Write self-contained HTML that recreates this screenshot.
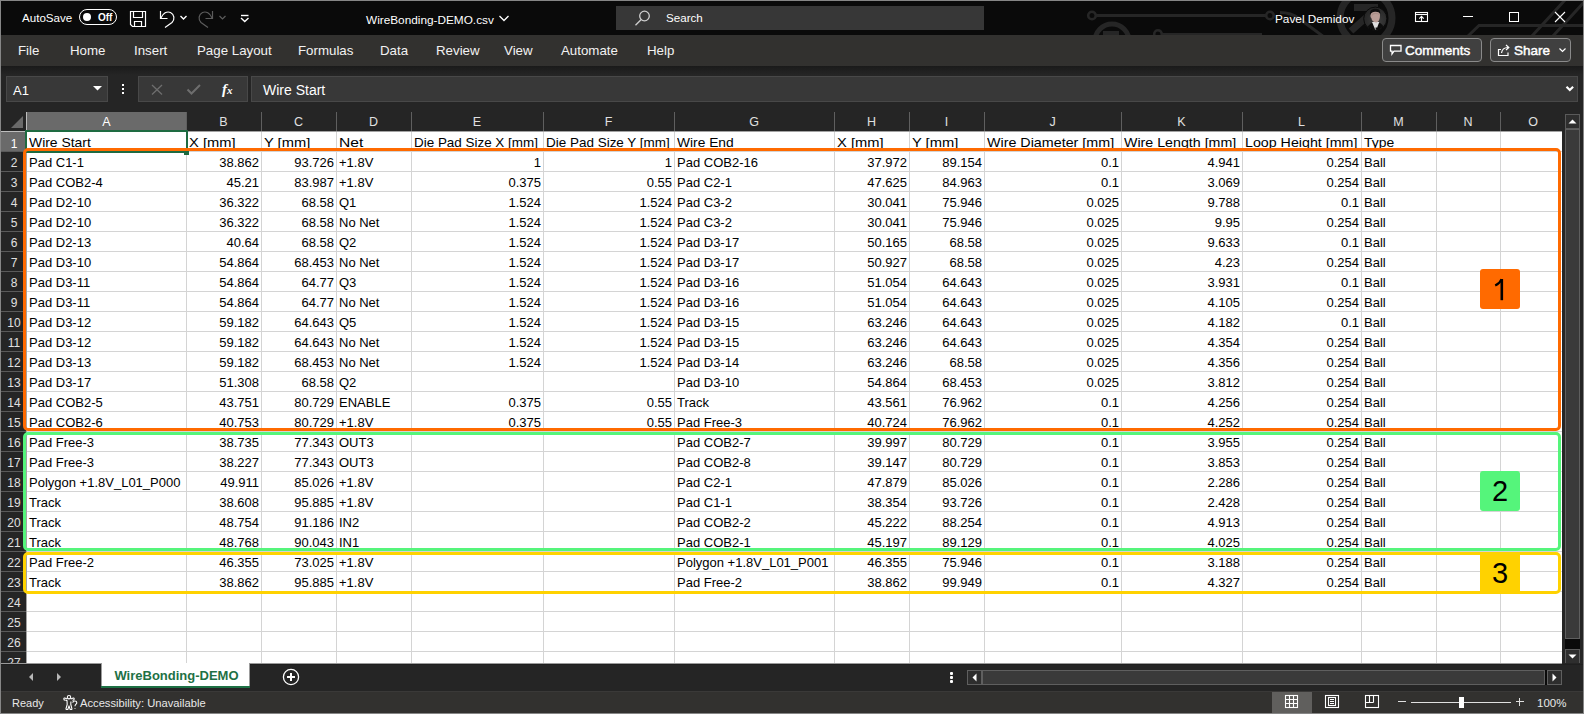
<!DOCTYPE html>
<html><head><meta charset="utf-8">
<style>
*{margin:0;padding:0;box-sizing:border-box}
html,body{width:1584px;height:714px;overflow:hidden;background:#0a0a0a;font-family:"Liberation Sans",sans-serif}
.a{position:absolute}
#frame{position:absolute;left:0;top:0;width:1584px;height:714px;border:1px solid #868686;z-index:50;pointer-events:none}
#title{position:absolute;left:1px;top:1px;width:1582px;height:34px;background:#0a0a0a;overflow:hidden}
#tabs{position:absolute;left:1px;top:35px;width:1582px;height:31px;background:#32312f}
#fbar{position:absolute;left:1px;top:66px;width:1582px;height:46px;background:linear-gradient(#1a1a1a,#252525 9px)}
#hdr{position:absolute;left:1px;top:112px;width:1582px;height:19px;background:#252525}
#rowhdr{position:absolute;left:1px;top:131px;width:25px;height:532px;background:#252525;overflow:hidden}
#cells{position:absolute;left:26px;top:131px;width:1536px;height:532px;background:#fff;overflow:hidden}
#vscroll{position:absolute;left:1562px;top:112px;width:21px;height:551px;background:#252525}
#sheetbar{position:absolute;left:1px;top:663px;width:1582px;height:28px;background:#252525}
#status{position:absolute;left:1px;top:691px;width:1582px;height:22px;background:#32312f;border-top:1px solid #3a3938}
.wt{position:absolute;color:#fff;font-size:12px;white-space:nowrap;line-height:14px}
.tab{position:absolute;color:#f2f2f2;font-size:13.3px;white-space:nowrap;line-height:15px;top:42.5px}
.vl{position:absolute;top:0;width:1px;height:532px;background:#d4d4d4}
.hl{position:absolute;left:0;height:1px;width:1536px;background:#d4d4d4}
.ch{position:absolute;top:112px;height:19px;color:#e0e0e0;font-size:12.5px;text-align:center;line-height:21px}
.ch.sel{background:#6a6a6a;color:#fff;border-left:1px solid #bdbdbd}
.chs{position:absolute;top:112px;width:1px;height:19px;background:#5f5f5f}
.rh{position:absolute;left:0;width:25px;height:20px;color:#e0e0e0;font-size:12px;text-align:center;line-height:24px;padding-left:1px}
.rh.sel{background:#6a6a6a;color:#fff;border-top:1px solid #bdbdbd}
.rhs{position:absolute;left:0;width:25px;height:1px;background:#5a5a5a}
.t{position:absolute;color:#000;font-size:13px;white-space:nowrap;line-height:20px;height:20px;padding-top:2px}
.t.r{text-align:right;left:0}
.lab{position:absolute;width:40px;height:40px;border-radius:3px;text-align:center;line-height:40px;font-size:29px;color:#000}
</style></head><body>
<div id="frame"></div>

<div id="title">
<svg class="a" style="left:-1px;top:-1px" width="1584" height="36" fill="none" stroke="#262626">
<path d="M1092,15.5H1270" stroke-width="3"/>
<circle cx="1092" cy="15.5" r="3.8" stroke-width="2.6" fill="#0a0a0a"/>
<circle cx="1270" cy="15.5" r="3.8" stroke-width="2.6" fill="#0a0a0a"/>
<circle cx="1112" cy="41" r="17" stroke-width="5"/>
<rect x="1103" y="31" width="16" height="6" fill="#262626" stroke="none"/>
<circle cx="1158" cy="34" r="3.8" stroke-width="2.6"/>
<path d="M1162,34.5H1262" stroke-width="3"/>
<path d="M1280,12.5Q1291,12.5 1299,18.5L1324,37" stroke-width="3"/>
<circle cx="1366" cy="18" r="26" stroke-width="7"/>
<path d="M1354,7.5H1378M1378,7L1351,31" stroke-width="7"/>
<path d="M1468,36L1479,25.5H1584" stroke-width="3"/>
<path d="M1565,0L1532,36M1586,0L1553,36" stroke-width="3"/>
</svg>
</div>
<div class="wt" style="left:22px;top:11px;font-size:11.6px">AutoSave</div>
<div class="a" style="left:79px;top:9px;width:38px;height:16px;border:1.5px solid #fff;border-radius:8px"></div>
<div class="a" style="left:83px;top:13px;width:8px;height:8px;border-radius:50%;background:#fff"></div>
<div class="wt" style="left:98px;top:11px;font-size:10px;font-weight:bold">Off</div>
<svg class="a" style="left:129px;top:10px" width="18" height="18" fill="none" stroke="#fff" stroke-width="1.2">
<path d="M1.5,1.5H16.5V16.5H3.5L1.5,14.5Z"/><path d="M4.5,1.5V7.5H13.5V1.5"/><path d="M5.5,16.5V11.5H12.5V16.5"/>
</svg>
<svg class="a" style="left:158px;top:9px" width="20" height="20" fill="none" stroke="#fff" stroke-width="1.2">
<path d="M2.5,2V9.5H9.5"/><path d="M2.8,9.2C5,4 9,2 12.5,3.5C16.5,5.5 17,10.5 14,13.5L7,18.5"/>
</svg>
<svg class="a" style="left:179px;top:14px" width="10" height="8" fill="none" stroke="#fff" stroke-width="1.4"><path d="M1.5,2L4.5,5L7.5,2"/></svg>
<svg class="a" style="left:197px;top:9px" width="20" height="20" fill="none" stroke="#5c5c5c" stroke-width="1.2">
<path d="M15.5,2V9.5H8.5"/><path d="M15.2,9.2C13,4 9,2 5.5,3.5C1.5,5.5 1,10.5 4,13.5L11,18.5"/>
</svg>
<svg class="a" style="left:218px;top:14px" width="10" height="8" fill="none" stroke="#5c5c5c" stroke-width="1.2"><path d="M1.5,2L4.5,5L7.5,2"/></svg>
<svg class="a" style="left:239px;top:13px" width="12" height="10" fill="none" stroke="#fff" stroke-width="1.4"><path d="M2,2.5H9.5"/><path d="M2,5L5.75,8.5L9.5,5"/></svg>
<div class="wt" style="left:366px;top:12.5px;font-size:11.8px">WireBonding-DEMO.csv</div>
<svg class="a" style="left:498px;top:14px" width="13" height="9" fill="none" stroke="#fff" stroke-width="1.3"><path d="M1.5,2L6,6.5L10.5,2"/></svg>
<div class="a" style="left:616px;top:6px;width:368px;height:24px;background:#373737"></div>
<svg class="a" style="left:633px;top:9px" width="20" height="18" fill="none" stroke="#cfcfcf" stroke-width="1.3"><circle cx="11.5" cy="7" r="4.8"/><path d="M8.2,10.5L2.5,16.2"/></svg>
<div class="wt" style="left:666px;top:11px;font-size:11.6px">Search</div>
<div class="wt" style="left:1275px;top:12px;font-size:11.8px">Pavel Demidov</div>
<svg class="a" style="left:1363px;top:6px" width="25" height="26">
<defs><clipPath id="av"><circle cx="12.3" cy="12.7" r="11"/></clipPath><radialGradient id="avg" cx="0.6" cy="0.6" r="0.6"><stop offset="0" stop-color="#3c3c3c"/><stop offset="1" stop-color="#262626"/></radialGradient></defs>
<circle cx="12.3" cy="12.7" r="11.6" fill="url(#avg)" stroke="#0a0a0a" stroke-width="1"/>
<g clip-path="url(#av)">
<path d="M2,27C3,21 6,18.5 9.5,16.5H16C19,18 22,21 23,27Z" fill="#0d0d0d"/>
<path d="M9,16L12.8,25L16.3,16Z" fill="#dedede"/>
<path d="M12.5,21.5L14,21.5L14.6,25.5L12.8,25.5Z" fill="#101010"/>
<path d="M7.6,8.5C7.8,5.5 9.5,4.8 12.3,4.8C15.5,4.8 17,5.8 17,9C17,13 16,16.2 13,16.4C10.5,16.4 8.7,14.5 8.3,12C7.5,11.6 7.3,10 7.6,8.5Z" fill="#b99d96"/>
<path d="M8.5,9.5C9,7.5 10,7 12.5,6.8C15,7 16.2,8 16.6,9.5L17,12C16.5,8.5 15,8 12.5,8C10,8 9,9 8.5,12Z" fill="#9a7f7a" opacity="0.5"/>
<path d="M7,9C6.6,5 8.5,2.8 12,2.8C15.5,2.8 17.5,4 17.3,8C16.3,6.3 14.5,5.6 12,5.8C10,5.8 8.3,6.8 7,9Z" fill="#0e0e0e"/>
</g>
</svg>
<svg class="a" style="left:1414px;top:11px" width="16" height="13" fill="none" stroke="#fff" stroke-width="1.1"><rect x="1.5" y="1.5" width="12" height="9"/><path d="M1.5,3.5H13.5"/><path d="M7.5,10.5V5.5M5.3,7.6L7.5,5.4L9.7,7.6"/></svg>
<div class="a" style="left:1463px;top:16px;width:10px;height:1px;background:#fff"></div>
<div class="a" style="left:1509px;top:12px;width:10px;height:10px;border:1px solid #fff"></div>
<svg class="a" style="left:1554px;top:11px" width="12" height="12" fill="none" stroke="#fff" stroke-width="1.1"><path d="M1,1L11,11M11,1L1,11"/></svg>
<div id="tabs"></div>
<div class="tab" style="left:18px">File</div>
<div class="tab" style="left:70px">Home</div>
<div class="tab" style="left:134px">Insert</div>
<div class="tab" style="left:197px">Page Layout</div>
<div class="tab" style="left:298px">Formulas</div>
<div class="tab" style="left:380px">Data</div>
<div class="tab" style="left:436px">Review</div>
<div class="tab" style="left:504px">View</div>
<div class="tab" style="left:561px">Automate</div>
<div class="tab" style="left:647px">Help</div>
<div class="a" style="left:1382px;top:38px;width:100px;height:24px;border:1px solid #8a8a8a;border-radius:4px;background:#404040"></div>
<svg class="a" style="left:1389px;top:44px" width="14" height="12" fill="none" stroke="#fff" stroke-width="1.3"><path d="M1.5,1.5H12V7.2H5L3,10V7.2H1.5Z"/></svg>
<div class="a" style="left:1405px;top:43px;font-size:13.5px;color:#fff;line-height:15px;-webkit-text-stroke:0.45px #fff">Comments</div>
<div class="a" style="left:1490px;top:38px;width:81px;height:24px;border:1px solid #8a8a8a;border-radius:4px;background:#404040"></div>
<svg class="a" style="left:1497px;top:43px" width="14" height="14" fill="none" stroke="#fff" stroke-width="1.2"><path d="M4,6.5H1.5V12.5H11V9.5"/><path d="M4.5,10C5,6.5 7.5,4.5 11,4.5"/><path d="M9,2L11.8,4.5L9,7"/></svg>
<div class="a" style="left:1514px;top:43px;font-size:13.5px;color:#fff;line-height:15px;-webkit-text-stroke:0.45px #fff">Share</div>
<svg class="a" style="left:1558px;top:47px" width="10" height="7" fill="none" stroke="#fff" stroke-width="1.2"><path d="M1.5,1.5L4.5,4.5L7.5,1.5"/></svg>

<div id="fbar"></div>
<div class="a" style="left:6px;top:76px;width:102px;height:26px;background:#383838;border:1px solid #484848"></div>
<div class="wt" style="left:13px;top:84px;font-size:13px">A1</div>
<svg class="a" style="left:92px;top:85px" width="11" height="7"><polygon points="1,1 10,1 5.5,5.5" fill="#fff"/></svg>
<div class="a" style="left:122px;top:84px;width:2px;height:2px;background:#fff"></div>
<div class="a" style="left:122px;top:88px;width:2px;height:2px;background:#fff"></div>
<div class="a" style="left:122px;top:92px;width:2px;height:2px;background:#fff"></div>
<div class="a" style="left:138px;top:76px;width:110px;height:26px;background:#383838;border:1px solid #484848"></div>
<svg class="a" style="left:150px;top:83px" width="14" height="13" fill="none" stroke="#6e6e6e" stroke-width="1.3"><path d="M2,2L12,11.5M12,2L2,11.5"/></svg>
<svg class="a" style="left:186px;top:83px" width="16" height="13" fill="none" stroke="#6e6e6e" stroke-width="2"><path d="M1.5,6.5L5.5,10.5L14,2"/></svg>
<div class="a" style="left:222px;top:80px;font-family:'Liberation Serif',serif;font-style:italic;font-weight:bold;font-size:15px;color:#fff;line-height:18px">f<span style="font-size:11px">x</span></div>
<div class="a" style="left:251px;top:76px;width:1327px;height:26px;background:#383838;border:1px solid #484848"></div>
<svg class="a" style="left:1565px;top:85px" width="10" height="8" fill="none" stroke="#fff" stroke-width="2.2"><path d="M1.5,1.8L4.8,5L8.1,1.8"/></svg>
<div class="wt" style="left:263px;top:83px;font-size:14px">Wire Start</div>

<div id="hdr"></div>
<div class="ch sel" style="left:26px;width:160px">A</div>
<div class="ch" style="left:186px;width:75px">B</div>
<div class="chs" style="left:186px"></div>
<div class="ch" style="left:261px;width:75px">C</div>
<div class="chs" style="left:261px"></div>
<div class="ch" style="left:336px;width:75px">D</div>
<div class="chs" style="left:336px"></div>
<div class="ch" style="left:411px;width:132px">E</div>
<div class="chs" style="left:411px"></div>
<div class="ch" style="left:543px;width:131px">F</div>
<div class="chs" style="left:543px"></div>
<div class="ch" style="left:674px;width:160px">G</div>
<div class="chs" style="left:674px"></div>
<div class="ch" style="left:834px;width:75px">H</div>
<div class="chs" style="left:834px"></div>
<div class="ch" style="left:909px;width:75px">I</div>
<div class="chs" style="left:909px"></div>
<div class="ch" style="left:984px;width:137px">J</div>
<div class="chs" style="left:984px"></div>
<div class="ch" style="left:1121px;width:121px">K</div>
<div class="chs" style="left:1121px"></div>
<div class="ch" style="left:1242px;width:119px">L</div>
<div class="chs" style="left:1242px"></div>
<div class="ch" style="left:1361px;width:75px">M</div>
<div class="chs" style="left:1361px"></div>
<div class="ch" style="left:1436px;width:64px">N</div>
<div class="chs" style="left:1436px"></div>
<div class="ch" style="left:1500px;width:66px">O</div>
<div class="chs" style="left:1500px"></div>
<div id="rowhdr">
<div class="rh sel" style="top:0px">1</div>
<div class="rhs" style="top:20px"></div>
<div class="rh" style="top:20px">2</div>
<div class="rhs" style="top:40px"></div>
<div class="rh" style="top:40px">3</div>
<div class="rhs" style="top:60px"></div>
<div class="rh" style="top:60px">4</div>
<div class="rhs" style="top:80px"></div>
<div class="rh" style="top:80px">5</div>
<div class="rhs" style="top:100px"></div>
<div class="rh" style="top:100px">6</div>
<div class="rhs" style="top:120px"></div>
<div class="rh" style="top:120px">7</div>
<div class="rhs" style="top:140px"></div>
<div class="rh" style="top:140px">8</div>
<div class="rhs" style="top:160px"></div>
<div class="rh" style="top:160px">9</div>
<div class="rhs" style="top:180px"></div>
<div class="rh" style="top:180px">10</div>
<div class="rhs" style="top:200px"></div>
<div class="rh" style="top:200px">11</div>
<div class="rhs" style="top:220px"></div>
<div class="rh" style="top:220px">12</div>
<div class="rhs" style="top:240px"></div>
<div class="rh" style="top:240px">13</div>
<div class="rhs" style="top:260px"></div>
<div class="rh" style="top:260px">14</div>
<div class="rhs" style="top:280px"></div>
<div class="rh" style="top:280px">15</div>
<div class="rhs" style="top:300px"></div>
<div class="rh" style="top:300px">16</div>
<div class="rhs" style="top:320px"></div>
<div class="rh" style="top:320px">17</div>
<div class="rhs" style="top:340px"></div>
<div class="rh" style="top:340px">18</div>
<div class="rhs" style="top:360px"></div>
<div class="rh" style="top:360px">19</div>
<div class="rhs" style="top:380px"></div>
<div class="rh" style="top:380px">20</div>
<div class="rhs" style="top:400px"></div>
<div class="rh" style="top:400px">21</div>
<div class="rhs" style="top:420px"></div>
<div class="rh" style="top:420px">22</div>
<div class="rhs" style="top:440px"></div>
<div class="rh" style="top:440px">23</div>
<div class="rhs" style="top:460px"></div>
<div class="rh" style="top:460px">24</div>
<div class="rhs" style="top:480px"></div>
<div class="rh" style="top:480px">25</div>
<div class="rhs" style="top:500px"></div>
<div class="rh" style="top:500px">26</div>
<div class="rhs" style="top:520px"></div>
<div class="rh" style="top:520px">27</div>
<div class="rhs" style="top:540px"></div>
</div>
<div id="cells">
<div class="vl" style="left:160px"></div>
<div class="vl" style="left:235px"></div>
<div class="vl" style="left:310px"></div>
<div class="vl" style="left:385px"></div>
<div class="vl" style="left:517px"></div>
<div class="vl" style="left:648px"></div>
<div class="vl" style="left:808px"></div>
<div class="vl" style="left:883px"></div>
<div class="vl" style="left:958px"></div>
<div class="vl" style="left:1095px"></div>
<div class="vl" style="left:1216px"></div>
<div class="vl" style="left:1335px"></div>
<div class="vl" style="left:1410px"></div>
<div class="vl" style="left:1474px"></div>
<div class="hl" style="top:20px"></div>
<div class="hl" style="top:40px"></div>
<div class="hl" style="top:60px"></div>
<div class="hl" style="top:80px"></div>
<div class="hl" style="top:100px"></div>
<div class="hl" style="top:120px"></div>
<div class="hl" style="top:140px"></div>
<div class="hl" style="top:160px"></div>
<div class="hl" style="top:180px"></div>
<div class="hl" style="top:200px"></div>
<div class="hl" style="top:220px"></div>
<div class="hl" style="top:240px"></div>
<div class="hl" style="top:260px"></div>
<div class="hl" style="top:280px"></div>
<div class="hl" style="top:300px"></div>
<div class="hl" style="top:320px"></div>
<div class="hl" style="top:340px"></div>
<div class="hl" style="top:360px"></div>
<div class="hl" style="top:380px"></div>
<div class="hl" style="top:400px"></div>
<div class="hl" style="top:420px"></div>
<div class="hl" style="top:440px"></div>
<div class="hl" style="top:460px"></div>
<div class="hl" style="top:480px"></div>
<div class="hl" style="top:500px"></div>
<div class="hl" style="top:520px"></div>
<div class="a" style="left:0;top:0;width:1536px;height:1px;background:#a3a3a3"></div>
<div class="a" style="left:0;top:0;width:1px;height:532px;background:#a3a3a3"></div>
<div class="t" style="top:0px;left:3px;transform:scaleX(1.07);transform-origin:0 0">Wire Start</div>
<div class="t" style="top:0px;left:163px;transform:scaleX(1.13);transform-origin:0 0">X [mm]</div>
<div class="t" style="top:0px;left:238px;transform:scaleX(1.13);transform-origin:0 0">Y [mm]</div>
<div class="t" style="top:0px;left:313px;transform:scaleX(1.2);transform-origin:0 0">Net</div>
<div class="t" style="top:0px;left:388px;transform:scaleX(1.033);transform-origin:0 0">Die Pad Size X [mm]</div>
<div class="t" style="top:0px;left:520px;transform:scaleX(1.036);transform-origin:0 0">Die Pad Size Y [mm]</div>
<div class="t" style="top:0px;left:651px;transform:scaleX(1.06);transform-origin:0 0">Wire End</div>
<div class="t" style="top:0px;left:811px;transform:scaleX(1.13);transform-origin:0 0">X [mm]</div>
<div class="t" style="top:0px;left:886px;transform:scaleX(1.13);transform-origin:0 0">Y [mm]</div>
<div class="t" style="top:0px;left:961px;transform:scaleX(1.1);transform-origin:0 0">Wire Diameter [mm]</div>
<div class="t" style="top:0px;left:1098px;transform:scaleX(1.094);transform-origin:0 0">Wire Length [mm]</div>
<div class="t" style="top:0px;left:1219px;transform:scaleX(1.095);transform-origin:0 0">Loop Height [mm]</div>
<div class="t" style="top:0px;left:1338px;transform:scaleX(1.07);transform-origin:0 0">Type</div>
<div class="t" style="top:20px;left:3px">Pad C1-1</div>
<div class="t r" style="top:20px;left:160px;width:73px">38.862</div>
<div class="t r" style="top:20px;left:235px;width:73px">93.726</div>
<div class="t" style="top:20px;left:313px">+1.8V</div>
<div class="t r" style="top:20px;left:385px;width:130px">1</div>
<div class="t r" style="top:20px;left:517px;width:129px">1</div>
<div class="t" style="top:20px;left:651px">Pad COB2-16</div>
<div class="t r" style="top:20px;left:808px;width:73px">37.972</div>
<div class="t r" style="top:20px;left:883px;width:73px">89.154</div>
<div class="t r" style="top:20px;left:958px;width:135px">0.1</div>
<div class="t r" style="top:20px;left:1095px;width:119px">4.941</div>
<div class="t r" style="top:20px;left:1216px;width:117px">0.254</div>
<div class="t" style="top:20px;left:1338px">Ball</div>
<div class="t" style="top:40px;left:3px">Pad COB2-4</div>
<div class="t r" style="top:40px;left:160px;width:73px">45.21</div>
<div class="t r" style="top:40px;left:235px;width:73px">83.987</div>
<div class="t" style="top:40px;left:313px">+1.8V</div>
<div class="t r" style="top:40px;left:385px;width:130px">0.375</div>
<div class="t r" style="top:40px;left:517px;width:129px">0.55</div>
<div class="t" style="top:40px;left:651px">Pad C2-1</div>
<div class="t r" style="top:40px;left:808px;width:73px">47.625</div>
<div class="t r" style="top:40px;left:883px;width:73px">84.963</div>
<div class="t r" style="top:40px;left:958px;width:135px">0.1</div>
<div class="t r" style="top:40px;left:1095px;width:119px">3.069</div>
<div class="t r" style="top:40px;left:1216px;width:117px">0.254</div>
<div class="t" style="top:40px;left:1338px">Ball</div>
<div class="t" style="top:60px;left:3px">Pad D2-10</div>
<div class="t r" style="top:60px;left:160px;width:73px">36.322</div>
<div class="t r" style="top:60px;left:235px;width:73px">68.58</div>
<div class="t" style="top:60px;left:313px">Q1</div>
<div class="t r" style="top:60px;left:385px;width:130px">1.524</div>
<div class="t r" style="top:60px;left:517px;width:129px">1.524</div>
<div class="t" style="top:60px;left:651px">Pad C3-2</div>
<div class="t r" style="top:60px;left:808px;width:73px">30.041</div>
<div class="t r" style="top:60px;left:883px;width:73px">75.946</div>
<div class="t r" style="top:60px;left:958px;width:135px">0.025</div>
<div class="t r" style="top:60px;left:1095px;width:119px">9.788</div>
<div class="t r" style="top:60px;left:1216px;width:117px">0.1</div>
<div class="t" style="top:60px;left:1338px">Ball</div>
<div class="t" style="top:80px;left:3px">Pad D2-10</div>
<div class="t r" style="top:80px;left:160px;width:73px">36.322</div>
<div class="t r" style="top:80px;left:235px;width:73px">68.58</div>
<div class="t" style="top:80px;left:313px">No Net</div>
<div class="t r" style="top:80px;left:385px;width:130px">1.524</div>
<div class="t r" style="top:80px;left:517px;width:129px">1.524</div>
<div class="t" style="top:80px;left:651px">Pad C3-2</div>
<div class="t r" style="top:80px;left:808px;width:73px">30.041</div>
<div class="t r" style="top:80px;left:883px;width:73px">75.946</div>
<div class="t r" style="top:80px;left:958px;width:135px">0.025</div>
<div class="t r" style="top:80px;left:1095px;width:119px">9.95</div>
<div class="t r" style="top:80px;left:1216px;width:117px">0.254</div>
<div class="t" style="top:80px;left:1338px">Ball</div>
<div class="t" style="top:100px;left:3px">Pad D2-13</div>
<div class="t r" style="top:100px;left:160px;width:73px">40.64</div>
<div class="t r" style="top:100px;left:235px;width:73px">68.58</div>
<div class="t" style="top:100px;left:313px">Q2</div>
<div class="t r" style="top:100px;left:385px;width:130px">1.524</div>
<div class="t r" style="top:100px;left:517px;width:129px">1.524</div>
<div class="t" style="top:100px;left:651px">Pad D3-17</div>
<div class="t r" style="top:100px;left:808px;width:73px">50.165</div>
<div class="t r" style="top:100px;left:883px;width:73px">68.58</div>
<div class="t r" style="top:100px;left:958px;width:135px">0.025</div>
<div class="t r" style="top:100px;left:1095px;width:119px">9.633</div>
<div class="t r" style="top:100px;left:1216px;width:117px">0.1</div>
<div class="t" style="top:100px;left:1338px">Ball</div>
<div class="t" style="top:120px;left:3px">Pad D3-10</div>
<div class="t r" style="top:120px;left:160px;width:73px">54.864</div>
<div class="t r" style="top:120px;left:235px;width:73px">68.453</div>
<div class="t" style="top:120px;left:313px">No Net</div>
<div class="t r" style="top:120px;left:385px;width:130px">1.524</div>
<div class="t r" style="top:120px;left:517px;width:129px">1.524</div>
<div class="t" style="top:120px;left:651px">Pad D3-17</div>
<div class="t r" style="top:120px;left:808px;width:73px">50.927</div>
<div class="t r" style="top:120px;left:883px;width:73px">68.58</div>
<div class="t r" style="top:120px;left:958px;width:135px">0.025</div>
<div class="t r" style="top:120px;left:1095px;width:119px">4.23</div>
<div class="t r" style="top:120px;left:1216px;width:117px">0.254</div>
<div class="t" style="top:120px;left:1338px">Ball</div>
<div class="t" style="top:140px;left:3px">Pad D3-11</div>
<div class="t r" style="top:140px;left:160px;width:73px">54.864</div>
<div class="t r" style="top:140px;left:235px;width:73px">64.77</div>
<div class="t" style="top:140px;left:313px">Q3</div>
<div class="t r" style="top:140px;left:385px;width:130px">1.524</div>
<div class="t r" style="top:140px;left:517px;width:129px">1.524</div>
<div class="t" style="top:140px;left:651px">Pad D3-16</div>
<div class="t r" style="top:140px;left:808px;width:73px">51.054</div>
<div class="t r" style="top:140px;left:883px;width:73px">64.643</div>
<div class="t r" style="top:140px;left:958px;width:135px">0.025</div>
<div class="t r" style="top:140px;left:1095px;width:119px">3.931</div>
<div class="t r" style="top:140px;left:1216px;width:117px">0.1</div>
<div class="t" style="top:140px;left:1338px">Ball</div>
<div class="t" style="top:160px;left:3px">Pad D3-11</div>
<div class="t r" style="top:160px;left:160px;width:73px">54.864</div>
<div class="t r" style="top:160px;left:235px;width:73px">64.77</div>
<div class="t" style="top:160px;left:313px">No Net</div>
<div class="t r" style="top:160px;left:385px;width:130px">1.524</div>
<div class="t r" style="top:160px;left:517px;width:129px">1.524</div>
<div class="t" style="top:160px;left:651px">Pad D3-16</div>
<div class="t r" style="top:160px;left:808px;width:73px">51.054</div>
<div class="t r" style="top:160px;left:883px;width:73px">64.643</div>
<div class="t r" style="top:160px;left:958px;width:135px">0.025</div>
<div class="t r" style="top:160px;left:1095px;width:119px">4.105</div>
<div class="t r" style="top:160px;left:1216px;width:117px">0.254</div>
<div class="t" style="top:160px;left:1338px">Ball</div>
<div class="t" style="top:180px;left:3px">Pad D3-12</div>
<div class="t r" style="top:180px;left:160px;width:73px">59.182</div>
<div class="t r" style="top:180px;left:235px;width:73px">64.643</div>
<div class="t" style="top:180px;left:313px">Q5</div>
<div class="t r" style="top:180px;left:385px;width:130px">1.524</div>
<div class="t r" style="top:180px;left:517px;width:129px">1.524</div>
<div class="t" style="top:180px;left:651px">Pad D3-15</div>
<div class="t r" style="top:180px;left:808px;width:73px">63.246</div>
<div class="t r" style="top:180px;left:883px;width:73px">64.643</div>
<div class="t r" style="top:180px;left:958px;width:135px">0.025</div>
<div class="t r" style="top:180px;left:1095px;width:119px">4.182</div>
<div class="t r" style="top:180px;left:1216px;width:117px">0.1</div>
<div class="t" style="top:180px;left:1338px">Ball</div>
<div class="t" style="top:200px;left:3px">Pad D3-12</div>
<div class="t r" style="top:200px;left:160px;width:73px">59.182</div>
<div class="t r" style="top:200px;left:235px;width:73px">64.643</div>
<div class="t" style="top:200px;left:313px">No Net</div>
<div class="t r" style="top:200px;left:385px;width:130px">1.524</div>
<div class="t r" style="top:200px;left:517px;width:129px">1.524</div>
<div class="t" style="top:200px;left:651px">Pad D3-15</div>
<div class="t r" style="top:200px;left:808px;width:73px">63.246</div>
<div class="t r" style="top:200px;left:883px;width:73px">64.643</div>
<div class="t r" style="top:200px;left:958px;width:135px">0.025</div>
<div class="t r" style="top:200px;left:1095px;width:119px">4.354</div>
<div class="t r" style="top:200px;left:1216px;width:117px">0.254</div>
<div class="t" style="top:200px;left:1338px">Ball</div>
<div class="t" style="top:220px;left:3px">Pad D3-13</div>
<div class="t r" style="top:220px;left:160px;width:73px">59.182</div>
<div class="t r" style="top:220px;left:235px;width:73px">68.453</div>
<div class="t" style="top:220px;left:313px">No Net</div>
<div class="t r" style="top:220px;left:385px;width:130px">1.524</div>
<div class="t r" style="top:220px;left:517px;width:129px">1.524</div>
<div class="t" style="top:220px;left:651px">Pad D3-14</div>
<div class="t r" style="top:220px;left:808px;width:73px">63.246</div>
<div class="t r" style="top:220px;left:883px;width:73px">68.58</div>
<div class="t r" style="top:220px;left:958px;width:135px">0.025</div>
<div class="t r" style="top:220px;left:1095px;width:119px">4.356</div>
<div class="t r" style="top:220px;left:1216px;width:117px">0.254</div>
<div class="t" style="top:220px;left:1338px">Ball</div>
<div class="t" style="top:240px;left:3px">Pad D3-17</div>
<div class="t r" style="top:240px;left:160px;width:73px">51.308</div>
<div class="t r" style="top:240px;left:235px;width:73px">68.58</div>
<div class="t" style="top:240px;left:313px">Q2</div>
<div class="t" style="top:240px;left:651px">Pad D3-10</div>
<div class="t r" style="top:240px;left:808px;width:73px">54.864</div>
<div class="t r" style="top:240px;left:883px;width:73px">68.453</div>
<div class="t r" style="top:240px;left:958px;width:135px">0.025</div>
<div class="t r" style="top:240px;left:1095px;width:119px">3.812</div>
<div class="t r" style="top:240px;left:1216px;width:117px">0.254</div>
<div class="t" style="top:240px;left:1338px">Ball</div>
<div class="t" style="top:260px;left:3px">Pad COB2-5</div>
<div class="t r" style="top:260px;left:160px;width:73px">43.751</div>
<div class="t r" style="top:260px;left:235px;width:73px">80.729</div>
<div class="t" style="top:260px;left:313px">ENABLE</div>
<div class="t r" style="top:260px;left:385px;width:130px">0.375</div>
<div class="t r" style="top:260px;left:517px;width:129px">0.55</div>
<div class="t" style="top:260px;left:651px">Track</div>
<div class="t r" style="top:260px;left:808px;width:73px">43.561</div>
<div class="t r" style="top:260px;left:883px;width:73px">76.962</div>
<div class="t r" style="top:260px;left:958px;width:135px">0.1</div>
<div class="t r" style="top:260px;left:1095px;width:119px">4.256</div>
<div class="t r" style="top:260px;left:1216px;width:117px">0.254</div>
<div class="t" style="top:260px;left:1338px">Ball</div>
<div class="t" style="top:280px;left:3px">Pad COB2-6</div>
<div class="t r" style="top:280px;left:160px;width:73px">40.753</div>
<div class="t r" style="top:280px;left:235px;width:73px">80.729</div>
<div class="t" style="top:280px;left:313px">+1.8V</div>
<div class="t r" style="top:280px;left:385px;width:130px">0.375</div>
<div class="t r" style="top:280px;left:517px;width:129px">0.55</div>
<div class="t" style="top:280px;left:651px">Pad Free-3</div>
<div class="t r" style="top:280px;left:808px;width:73px">40.724</div>
<div class="t r" style="top:280px;left:883px;width:73px">76.962</div>
<div class="t r" style="top:280px;left:958px;width:135px">0.1</div>
<div class="t r" style="top:280px;left:1095px;width:119px">4.252</div>
<div class="t r" style="top:280px;left:1216px;width:117px">0.254</div>
<div class="t" style="top:280px;left:1338px">Ball</div>
<div class="t" style="top:300px;left:3px">Pad Free-3</div>
<div class="t r" style="top:300px;left:160px;width:73px">38.735</div>
<div class="t r" style="top:300px;left:235px;width:73px">77.343</div>
<div class="t" style="top:300px;left:313px">OUT3</div>
<div class="t" style="top:300px;left:651px">Pad COB2-7</div>
<div class="t r" style="top:300px;left:808px;width:73px">39.997</div>
<div class="t r" style="top:300px;left:883px;width:73px">80.729</div>
<div class="t r" style="top:300px;left:958px;width:135px">0.1</div>
<div class="t r" style="top:300px;left:1095px;width:119px">3.955</div>
<div class="t r" style="top:300px;left:1216px;width:117px">0.254</div>
<div class="t" style="top:300px;left:1338px">Ball</div>
<div class="t" style="top:320px;left:3px">Pad Free-3</div>
<div class="t r" style="top:320px;left:160px;width:73px">38.227</div>
<div class="t r" style="top:320px;left:235px;width:73px">77.343</div>
<div class="t" style="top:320px;left:313px">OUT3</div>
<div class="t" style="top:320px;left:651px">Pad COB2-8</div>
<div class="t r" style="top:320px;left:808px;width:73px">39.147</div>
<div class="t r" style="top:320px;left:883px;width:73px">80.729</div>
<div class="t r" style="top:320px;left:958px;width:135px">0.1</div>
<div class="t r" style="top:320px;left:1095px;width:119px">3.853</div>
<div class="t r" style="top:320px;left:1216px;width:117px">0.254</div>
<div class="t" style="top:320px;left:1338px">Ball</div>
<div class="t" style="top:340px;left:3px">Polygon +1.8V_L01_P000</div>
<div class="t r" style="top:340px;left:160px;width:73px">49.911</div>
<div class="t r" style="top:340px;left:235px;width:73px">85.026</div>
<div class="t" style="top:340px;left:313px">+1.8V</div>
<div class="t" style="top:340px;left:651px">Pad C2-1</div>
<div class="t r" style="top:340px;left:808px;width:73px">47.879</div>
<div class="t r" style="top:340px;left:883px;width:73px">85.026</div>
<div class="t r" style="top:340px;left:958px;width:135px">0.1</div>
<div class="t r" style="top:340px;left:1095px;width:119px">2.286</div>
<div class="t r" style="top:340px;left:1216px;width:117px">0.254</div>
<div class="t" style="top:340px;left:1338px">Ball</div>
<div class="t" style="top:360px;left:3px">Track</div>
<div class="t r" style="top:360px;left:160px;width:73px">38.608</div>
<div class="t r" style="top:360px;left:235px;width:73px">95.885</div>
<div class="t" style="top:360px;left:313px">+1.8V</div>
<div class="t" style="top:360px;left:651px">Pad C1-1</div>
<div class="t r" style="top:360px;left:808px;width:73px">38.354</div>
<div class="t r" style="top:360px;left:883px;width:73px">93.726</div>
<div class="t r" style="top:360px;left:958px;width:135px">0.1</div>
<div class="t r" style="top:360px;left:1095px;width:119px">2.428</div>
<div class="t r" style="top:360px;left:1216px;width:117px">0.254</div>
<div class="t" style="top:360px;left:1338px">Ball</div>
<div class="t" style="top:380px;left:3px">Track</div>
<div class="t r" style="top:380px;left:160px;width:73px">48.754</div>
<div class="t r" style="top:380px;left:235px;width:73px">91.186</div>
<div class="t" style="top:380px;left:313px">IN2</div>
<div class="t" style="top:380px;left:651px">Pad COB2-2</div>
<div class="t r" style="top:380px;left:808px;width:73px">45.222</div>
<div class="t r" style="top:380px;left:883px;width:73px">88.254</div>
<div class="t r" style="top:380px;left:958px;width:135px">0.1</div>
<div class="t r" style="top:380px;left:1095px;width:119px">4.913</div>
<div class="t r" style="top:380px;left:1216px;width:117px">0.254</div>
<div class="t" style="top:380px;left:1338px">Ball</div>
<div class="t" style="top:400px;left:3px">Track</div>
<div class="t r" style="top:400px;left:160px;width:73px">48.768</div>
<div class="t r" style="top:400px;left:235px;width:73px">90.043</div>
<div class="t" style="top:400px;left:313px">IN1</div>
<div class="t" style="top:400px;left:651px">Pad COB2-1</div>
<div class="t r" style="top:400px;left:808px;width:73px">45.197</div>
<div class="t r" style="top:400px;left:883px;width:73px">89.129</div>
<div class="t r" style="top:400px;left:958px;width:135px">0.1</div>
<div class="t r" style="top:400px;left:1095px;width:119px">4.025</div>
<div class="t r" style="top:400px;left:1216px;width:117px">0.254</div>
<div class="t" style="top:400px;left:1338px">Ball</div>
<div class="t" style="top:420px;left:3px">Pad Free-2</div>
<div class="t r" style="top:420px;left:160px;width:73px">46.355</div>
<div class="t r" style="top:420px;left:235px;width:73px">73.025</div>
<div class="t" style="top:420px;left:313px">+1.8V</div>
<div class="t" style="top:420px;left:651px">Polygon +1.8V_L01_P001</div>
<div class="t r" style="top:420px;left:808px;width:73px">46.355</div>
<div class="t r" style="top:420px;left:883px;width:73px">75.946</div>
<div class="t r" style="top:420px;left:958px;width:135px">0.1</div>
<div class="t r" style="top:420px;left:1095px;width:119px">3.188</div>
<div class="t r" style="top:420px;left:1216px;width:117px">0.254</div>
<div class="t" style="top:420px;left:1338px">Ball</div>
<div class="t" style="top:440px;left:3px">Track</div>
<div class="t r" style="top:440px;left:160px;width:73px">38.862</div>
<div class="t r" style="top:440px;left:235px;width:73px">95.885</div>
<div class="t" style="top:440px;left:313px">+1.8V</div>
<div class="t" style="top:440px;left:651px">Pad Free-2</div>
<div class="t r" style="top:440px;left:808px;width:73px">38.862</div>
<div class="t r" style="top:440px;left:883px;width:73px">99.949</div>
<div class="t r" style="top:440px;left:958px;width:135px">0.1</div>
<div class="t r" style="top:440px;left:1095px;width:119px">4.327</div>
<div class="t r" style="top:440px;left:1216px;width:117px">0.254</div>
<div class="t" style="top:440px;left:1338px">Ball</div>
</div>
<!-- corner triangle -->
<svg class="a" style="left:0;top:112px" width="26" height="19"><polygon points="11,16 23,4 23,16" fill="#6a6a6a"/></svg>
<!-- selection A1 -->
<div class="a" style="left:25px;top:130px;width:163px;height:23px;border:2px solid #1e6b41"></div>
<div class="a" style="left:184px;top:151px;width:5px;height:4px;background:#1e6b41"></div>
<!-- annotations -->
<div class="a" style="left:23px;top:148px;width:1538px;height:283px;border:3px solid #ff6a00;border-radius:5px"></div>
<div class="a" style="left:23px;top:432px;width:1538px;height:119px;border:3px solid #55f57b;border-radius:5px"></div>
<div class="a" style="left:23px;top:552px;width:1538px;height:42px;border:3px solid #ffd200;border-radius:5px"></div>
<div class="lab" style="left:1480px;top:269px;background:#ff6a00"></div>
<svg class="a" style="left:1480px;top:269px" width="40" height="40"><path d="M21.8,10V31.2" stroke="#000" stroke-width="2.6"/><path d="M15.2,16.6C18,15.3 20.5,13 21.6,10.2" stroke="#000" stroke-width="2.2" fill="none"/></svg>
<div class="lab" style="left:1480px;top:471px;background:#55f57b">2</div>
<div class="lab" style="left:1480px;top:554px;height:38px;line-height:38px;border-radius:0;background:#ffd200">3</div>

<div id="vscroll"></div>
<div class="a" style="left:1565px;top:114px;width:15px;height:15px;background:#2e2e2e;border:1px solid #5a5a5a"></div>
<svg class="a" style="left:1565px;top:114px" width="15" height="15"><polygon points="3.5,9.5 7.5,5.5 11.5,9.5" fill="#fff"/></svg>
<div class="a" style="left:1565px;top:129px;width:15px;height:510px;background:#3a3a3a;border:1px solid #5f5f5f"></div>
<div class="a" style="left:1565px;top:639px;width:15px;height:10px;background:#0a0a0a"></div>
<div class="a" style="left:1565px;top:649px;width:15px;height:15px;background:#2e2e2e;border:1px solid #5a5a5a"></div>
<svg class="a" style="left:1565px;top:649px" width="15" height="15"><polygon points="3.5,5.5 7.5,9.5 11.5,5.5" fill="#fff"/></svg>

<div id="sheetbar"></div>
<svg class="a" style="left:26px;top:669.5px" width="10" height="14"><polygon points="7,3 3,7 7,11" fill="#b8b8b8"/></svg>
<svg class="a" style="left:54px;top:669.5px" width="10" height="14"><polygon points="3,3 7,7 3,11" fill="#b8b8b8"/></svg>
<div class="a" style="left:1px;top:663px;width:1561px;height:1px;background:#9a9a9a"></div>
<div class="a" style="left:1px;top:664px;width:1582px;height:1px;background:#1f1f1f"></div>
<div class="a" style="left:101px;top:663px;width:149px;height:25px;background:#fff;border-left:1px solid #9c9c9c;border-right:1px solid #9c9c9c"></div>
<div class="a" style="left:101px;top:686px;width:149px;height:2px;background:#1e7145"></div>
<div class="a" style="left:101px;top:667px;width:149px;height:18px;text-align:center;font-size:13px;font-weight:bold;color:#1e7145;line-height:18px;padding-left:2px">WireBonding-DEMO</div>
<svg class="a" style="left:281px;top:667px" width="20" height="20"><circle cx="10" cy="10" r="7.6" fill="none" stroke="#fff" stroke-width="1.3"/><path d="M10 6V14M6 10H14" stroke="#fff" stroke-width="2"/></svg>
<div class="a" style="left:950px;top:672px;width:3px;height:3px;background:#fff;border-radius:1px"></div>
<div class="a" style="left:950px;top:676px;width:3px;height:3px;background:#fff;border-radius:1px"></div>
<div class="a" style="left:950px;top:680px;width:3px;height:3px;background:#fff;border-radius:1px"></div>
<div class="a" style="left:967px;top:670px;width:15px;height:15px;background:#2e2e2e;border:1px solid #5f5f5f"></div>
<svg class="a" style="left:967px;top:670px" width="15" height="15"><polygon points="9.5,3.5 5.5,7.5 9.5,11.5" fill="#fff"/></svg>
<div class="a" style="left:982px;top:670px;width:563px;height:15px;background:#3a3a3a;border:1px solid #5f5f5f"></div>
<div class="a" style="left:1545px;top:670px;width:2px;height:15px;background:#0a0a0a"></div>
<div class="a" style="left:1547px;top:670px;width:15px;height:15px;background:#2e2e2e;border:1px solid #5f5f5f"></div>
<svg class="a" style="left:1547px;top:670px" width="15" height="15"><polygon points="5.5,3.5 9.5,7.5 5.5,11.5" fill="#fff"/></svg>

<div id="status"></div>
<div class="wt" style="left:12px;top:696px;font-size:11px;color:#e8e8e8">Ready</div>
<div class="wt" style="left:80px;top:696px;font-size:11.2px;color:#e8e8e8">Accessibility: Unavailable</div>
<div class="a" style="left:1272px;top:692px;width:40px;height:21px;background:#605f5d"></div>
<svg class="a" style="left:62px;top:694px" width="18" height="17" fill="none" stroke="#fff" stroke-width="1.1" stroke-linejoin="round">
<circle cx="7" cy="3.2" r="1.7"/>
<path d="M3.6,6.2C2.6,6.2 1.8,5.6 1.8,4.9C1.8,4.1 2.6,3.8 3.4,4.2L5.3,5.1M8.7,5.1L10.6,4.2C11.4,3.8 12.2,4.1 12.2,4.9C12.2,5.6 11.4,6.2 10.4,6.2"/>
<path d="M3.6,6.2L5,6.6L5.2,10.5L4,14.6C3.9,15.2 4.3,15.5 4.8,15.5H5.8L7,11.8L8.2,15.5H9.2C9.7,15.5 10.1,15.2 9.9,14.6L8.8,10.5L8.9,7.5"/>
<path d="M10.8,8.8C10.8,7.6 11.7,7 12.8,7C13.9,7 14.8,7.7 14.8,8.8C14.8,10.2 13,10.3 13,12.2"/>
<circle cx="13" cy="14.6" r="0.5" fill="#fff" stroke="none"/>
</svg>
<svg class="a" style="left:1284px;top:694px" width="15" height="15" fill="none" stroke="#fff" stroke-width="1.1"><rect x="1.5" y="1.5" width="12" height="12"/><path d="M5.5,1.5V13.5M9.5,1.5V13.5M1.5,5.5H13.5M1.5,9.5H13.5"/></svg>
<svg class="a" style="left:1324px;top:694px" width="16" height="16" fill="none" stroke="#fff" stroke-width="1.1"><rect x="1.5" y="1.5" width="13" height="12"/><rect x="4.5" y="3.5" width="7" height="8"/><path d="M6,5.5H10M6,7.5H10M6,9.5H10"/></svg>
<svg class="a" style="left:1364px;top:694px" width="16" height="16" fill="none" stroke="#fff" stroke-width="1.1"><rect x="1.5" y="1.5" width="13" height="12"/><path d="M5.5,1.5V8.5M9.5,1.5V8.5M1.5,8.5H9.5"/></svg>
<div class="wt" style="left:1537px;top:696px;font-size:11.5px;color:#e8e8e8">100%</div>
<div class="a" style="left:1411px;top:702px;width:100px;height:1px;background:#e0e0e0"></div>
<div class="a" style="left:1459px;top:697px;width:5px;height:11px;background:#fff"></div>
<div class="a" style="left:1398px;top:701px;width:8px;height:1px;background:#e0e0e0"></div>
<div class="a" style="left:1516px;top:701px;width:8px;height:1px;background:#e0e0e0"></div>
<div class="a" style="left:1519px;top:698px;width:1px;height:8px;background:#e0e0e0"></div>
</body></html>
